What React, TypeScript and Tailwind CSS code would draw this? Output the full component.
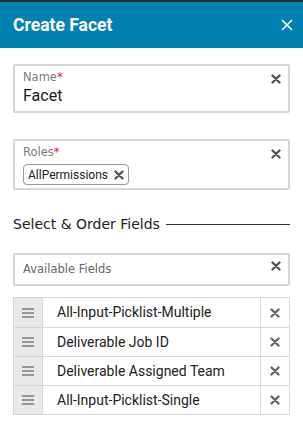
import React from "react"

const labelFont = { fontFamily: '"DejaVu Sans", "Open Sans", sans-serif' }
const valueFont = { fontFamily: 'Roboto, "Liberation Sans", sans-serif' }

function BoldX({ size = 10, className = "" }: { size?: number; className?: string }) {
  return (
    <svg width={size} height={size} viewBox="0 0 10 10" className={className}>
      <path d="M1.5 1.5 L8.5 8.5 M8.5 1.5 L1.5 8.5" stroke="currentColor" strokeWidth="2.4" strokeLinecap="round" />
    </svg>
  )
}

function Handle() {
  return (
    <svg width="12" height="10" viewBox="0 0 12 10">
      <path d="M0 1 H12 M0 5 H12 M0 9 H12" stroke="#7a7a7a" strokeWidth="1.4" />
    </svg>
  )
}

const fields = [
  "All-Input-Picklist-Multiple",
  "Deliverable Job ID",
  "Deliverable Assigned Team",
  "All-Input-Picklist-Single",
]

export default function App() {
  return (
    <div className="w-[303px] h-[430px] bg-white overflow-hidden">
      <div className="h-[2px] bg-[#2d2d2d]" />
      <div className="h-[46px] bg-[#0181b2] flex items-center justify-between pl-[13px] pr-[10px]">
        <span className="text-white text-[17.5px] font-bold" style={valueFont}>Create Facet</span>
        <svg width="12" height="12" viewBox="0 0 12 12">
          <path d="M1 1 L11 11 M11 1 L1 11" stroke="white" strokeWidth="1.6" />
        </svg>
      </div>

      <div className="px-[13px] pt-[16px]">
        {/* Name */}
        <div className="relative h-[49px] border-2 border-[#d6d6d6] rounded-[2px] px-[8px] pt-[3px]">
          <div className="text-[11.5px] text-[#7a7a7a] leading-[16px]" style={labelFont}>
            Name<span className="text-[#e2261c]">*</span>
          </div>
          <div className="text-[16px] text-[#1a1a1a] leading-[22px]" style={valueFont}>Facet</div>
          <BoldX className="absolute right-[7px] top-[8px] text-[#555]" />
        </div>

        {/* Roles */}
        <div className="relative mt-[26px] h-[51px] border-2 border-[#d6d6d6] rounded-[2px] px-[8px] pt-[3px]">
          <div className="text-[11.5px] text-[#7a7a7a] leading-[16px]" style={labelFont}>
            Roles<span className="text-[#e2261c]">*</span>
          </div>
          <div className="mt-[4px] inline-flex items-center gap-[6px] h-[21px] border border-[#999] rounded-[4px] px-[4px] bg-white">
            <span className="text-[12px] text-[#222]" style={valueFont}>AllPermissions</span>
            <BoldX size={10} className="text-[#555]" />
          </div>
          <BoldX className="absolute right-[7px] top-[8px] text-[#555]" />
        </div>

        {/* Section title */}
        <div className="mt-[24px] flex items-center gap-[6px]">
          <span className="text-[14px] text-[#222] whitespace-nowrap" style={labelFont}>Select &amp; Order Fields</span>
          <div className="flex-1 h-px bg-[#333]" />
        </div>

        {/* Available fields */}
        <div className="relative mt-[18px] h-[33px] border-2 border-[#d6d6d6] rounded-[2px] px-[8px] flex items-center">
          <span className="text-[11.5px] text-[#666]" style={labelFont}>Available Fields</span>
          <BoldX className="absolute right-[7px] top-[6px] text-[#555]" />
        </div>

        {/* Field list */}
        <div className="mt-[11px] border border-[#d6d6d6]">
          {fields.map((f, i) => (
            <div key={f} className={`flex h-[29px] ${i > 0 ? "border-t border-[#d6d6d6]" : ""}`}>
              <div className="w-[29px] bg-[#e9e9e9] border-r border-[#d6d6d6] flex items-center justify-center">
                <Handle />
              </div>
              <div className="flex-1 flex items-center pl-[14px] text-[14px] text-[#222]" style={valueFont}>{f}</div>
              <div className="w-[29px] border-l border-[#d6d6d6] flex items-center justify-center">
                <BoldX size={10} className="text-[#666]" />
              </div>
            </div>
          ))}
        </div>
      </div>
    </div>
  )
}
